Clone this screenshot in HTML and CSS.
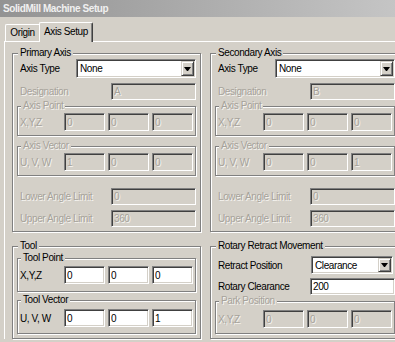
FILE: index.html
```html
<!DOCTYPE html>
<html>
<head>
  <meta charset="UTF-8">
  <title>SolidMill Machine Setup</title>
  <link rel="stylesheet" href="styles.css">
</head>
<body>
  <div class="window">
    <div class="titlebar">SolidMill Machine Setup</div>

    <div class="tabs">
      <div class="tab">Origin</div>
      <div class="tab active">Axis Setup</div>
    </div>

    <div class="panel">
      <!-- primary axis -->
      <fieldset class="group">
        <legend>Primary Axis</legend>
        <div class="row first">
          <span class="label">Axis Type</span>
          <div class="select axis-select"><span>None</span><i class="drop"></i></div>
        </div>
        <div class="row">
          <span class="label off">Designation</span>
          <input class="field long" value="A" disabled>
        </div>
        <fieldset class="sub off">
          <legend>Axis Point</legend>
          <div class="row">
            <span class="label">X,Y,Z</span>
            <div class="triple">
              <input class="field" value="0" disabled>
              <input class="field" value="0" disabled>
              <input class="field" value="0" disabled>
            </div>
          </div>
        </fieldset>
        <fieldset class="sub off vector">
          <legend>Axis Vector</legend>
          <div class="row">
            <span class="label">U, V, W</span>
            <div class="triple">
              <input class="field" value="1" disabled>
              <input class="field" value="0" disabled>
              <input class="field" value="0" disabled>
            </div>
          </div>
        </fieldset>
        <div class="row limit">
          <span class="label off">Lower Angle Limit</span>
          <input class="field long" value="0" disabled>
        </div>
        <div class="row">
          <span class="label off">Upper Angle Limit</span>
          <input class="field long" value="360" disabled>
        </div>
      </fieldset>

      <!-- secondary axis -->
      <fieldset class="group">
        <legend>Secondary Axis</legend>
        <div class="row first">
          <span class="label">Axis Type</span>
          <div class="select axis-select"><span>None</span><i class="drop"></i></div>
        </div>
        <div class="row">
          <span class="label off">Designation</span>
          <input class="field long" value="B" disabled>
        </div>
        <fieldset class="sub off">
          <legend>Axis Point</legend>
          <div class="row">
            <span class="label">X,Y,Z</span>
            <div class="triple">
              <input class="field" value="0" disabled>
              <input class="field" value="0" disabled>
              <input class="field" value="0" disabled>
            </div>
          </div>
        </fieldset>
        <fieldset class="sub off vector">
          <legend>Axis Vector</legend>
          <div class="row">
            <span class="label">U, V, W</span>
            <div class="triple">
              <input class="field" value="0" disabled>
              <input class="field" value="0" disabled>
              <input class="field" value="1" disabled>
            </div>
          </div>
        </fieldset>
        <div class="row limit">
          <span class="label off">Lower Angle Limit</span>
          <input class="field long" value="0" disabled>
        </div>
        <div class="row">
          <span class="label off">Upper Angle Limit</span>
          <input class="field long" value="360" disabled>
        </div>
      </fieldset>

      <!-- tool -->
      <fieldset class="group">
        <legend>Tool</legend>
        <fieldset class="sub tool-point">
          <legend>Tool Point</legend>
          <div class="row">
            <span class="label">X,Y,Z</span>
            <div class="triple">
              <input class="field" value="0">
              <input class="field" value="0">
              <input class="field" value="0">
            </div>
          </div>
        </fieldset>
        <fieldset class="sub tool-vector">
          <legend>Tool Vector</legend>
          <div class="row">
            <span class="label">U, V, W</span>
            <div class="triple">
              <input class="field" value="0">
              <input class="field" value="0">
              <input class="field" value="1">
            </div>
          </div>
        </fieldset>
      </fieldset>

      <!-- rotary retract -->
      <fieldset class="group">
        <legend>Rotary Retract Movement</legend>
        <div class="row retract">
          <span class="label">Retract Position</span>
          <div class="select retract-select"><span>Clearance</span><i class="drop"></i></div>
        </div>
        <div class="row clearance">
          <span class="label">Rotary Clearance</span>
          <input class="field long" value="200">
        </div>
        <fieldset class="sub off park">
          <legend>Park Position</legend>
          <div class="row">
            <span class="label">X,Y,Z</span>
            <div class="triple">
              <input class="field" value="0" disabled>
              <input class="field" value="0" disabled>
              <input class="field" value="0" disabled>
            </div>
          </div>
        </fieldset>
      </fieldset>
    </div>
  </div>
</body>
</html>
```

FILE: styles.css
```css
html, body {
  margin: 0;
  overflow: hidden;
}

body {
  background: #d4d0c8;
  font-family: "Liberation Sans", Arial, sans-serif;
  font-size: 10px;
  letter-spacing: -0.4px;
  color: #000;
}

.window {
  width: 420px;
  height: 342px;
  background: #d4d0c8;
}

.titlebar {
  height: 17px;
  line-height: 17px;
  padding-left: 3px;
  background: linear-gradient(to right, #939393, #c8c8c8);
  color: #f0f0f0;
  font-weight: bold;
  white-space: nowrap;
}

.tabs {
  display: flex;
  align-items: flex-end;
  height: 24px;
  padding-left: 5px;
}

.tab {
  box-sizing: border-box;
  height: 17px;
  width: 34px;
  text-align: center;
  line-height: 16px;
  border-top: 1px solid #fff;
  border-left: 1px solid #fff;
  border-radius: 2px 0 0 0;
}

.tab.active {
  position: relative;
  z-index: 1;
  width: 54px;
  height: 20px;
  line-height: 18px;
  margin-bottom: -1px;
  background: #d4d0c8;
  border-right: 1px solid #404040;
  box-shadow: inset -1px 0 0 #808080;
  border-radius: 2px 2px 0 0;
}

.panel {
  margin-left: 4px;
  border-top: 1px solid #fff;
  border-left: 1px solid #fff;
  padding: 5px 0 0 7px;
  display: grid;
  grid-template-columns: 189px 190px;
  column-gap: 9px;
  row-gap: 8px;
  align-items: start;
}

fieldset {
  margin: 0;
  min-inline-size: 0;
  border: 1px solid #808080;
  box-shadow: inset 1px 1px 0 #fff, 1px 1px 0 #fff;
}

legend {
  line-height: 12px;
  padding: 0 2px;
  margin-left: 1px;
  background: #d4d0c8;
}

.group {
  padding: 0 4px 4px 4px;
}

.sub {
  padding: 1px 2px 4px 2px;
}

.sub.vector {
  margin-top: 4px;
}

.sub.tool-point {
  padding-top: 2px;
  padding-bottom: 7px;
}

.sub.tool-vector {
  margin-top: 2px;
  padding-top: 3px;
  padding-bottom: 6px;
}

.sub.park {
  padding-top: 3px;
  padding-bottom: 5px;
}

.off,
.off legend,
.off .label {
  color: #a6a29a;
  text-shadow: 1px 1px 0 #f6f4f0;
}

.row {
  display: flex;
  align-items: center;
  height: 17px;
  margin-top: 5px;
}

.group > .row {
  padding-left: 3px;
}

.row.first {
  height: 19px;
  margin-top: 0;
}

.row.limit {
  margin-top: 12px;
}

.row.retract {
  height: 18px;
  margin-top: 4px;
}

.row.clearance {
  margin-top: 4px;
}

.sub .row {
  height: 18px;
  margin-top: 0;
}

.label {
  flex: 1;
  white-space: nowrap;
}

.triple {
  display: flex;
  gap: 3px;
}

.field {
  box-sizing: border-box;
  width: 41px;
  height: 18px;
  margin: 0;
  padding: 0 2px;
  font: inherit;
  letter-spacing: inherit;
  color: #000;
  background: #fff;
  border: 1px solid;
  border-color: #808080 #fff #fff #808080;
  box-shadow: inset 1px 1px 0 #404040, inset -1px -1px 0 #d4d0c8;
  outline: none;
}

.field:disabled {
  color: #a6a29a;
  background: #d4d0c8;
  text-shadow: 1px 1px 0 #f6f4f0;
}

.field.long {
  width: 85px;
  height: 17px;
}

.select {
  box-sizing: border-box;
  display: flex;
  align-items: center;
  height: 100%;
  background: #fff;
  border: 1px solid;
  border-color: #808080 #fff #fff #808080;
  box-shadow: inset 1px 1px 0 #404040, inset -1px -1px 0 #d4d0c8;
  padding: 1px;
}

.select span {
  flex: 1;
  padding-left: 2px;
}

.axis-select {
  width: 120px;
}

.retract-select {
  width: 82px;
  margin-right: 2px;
}

.drop {
  box-sizing: border-box;
  width: 13px;
  height: 100%;
  background: #d4d0c8;
  border: 1px solid;
  border-color: #d4d0c8 #404040 #404040 #d4d0c8;
  box-shadow: inset 1px 1px 0 #fff, inset -1px -1px 0 #808080;
  display: flex;
  align-items: center;
  justify-content: center;
}

.drop::after {
  content: "";
  width: 1px;
  border-top: 4px solid #000;
  border-left: 3px solid transparent;
  border-right: 3px solid transparent;
}
```
